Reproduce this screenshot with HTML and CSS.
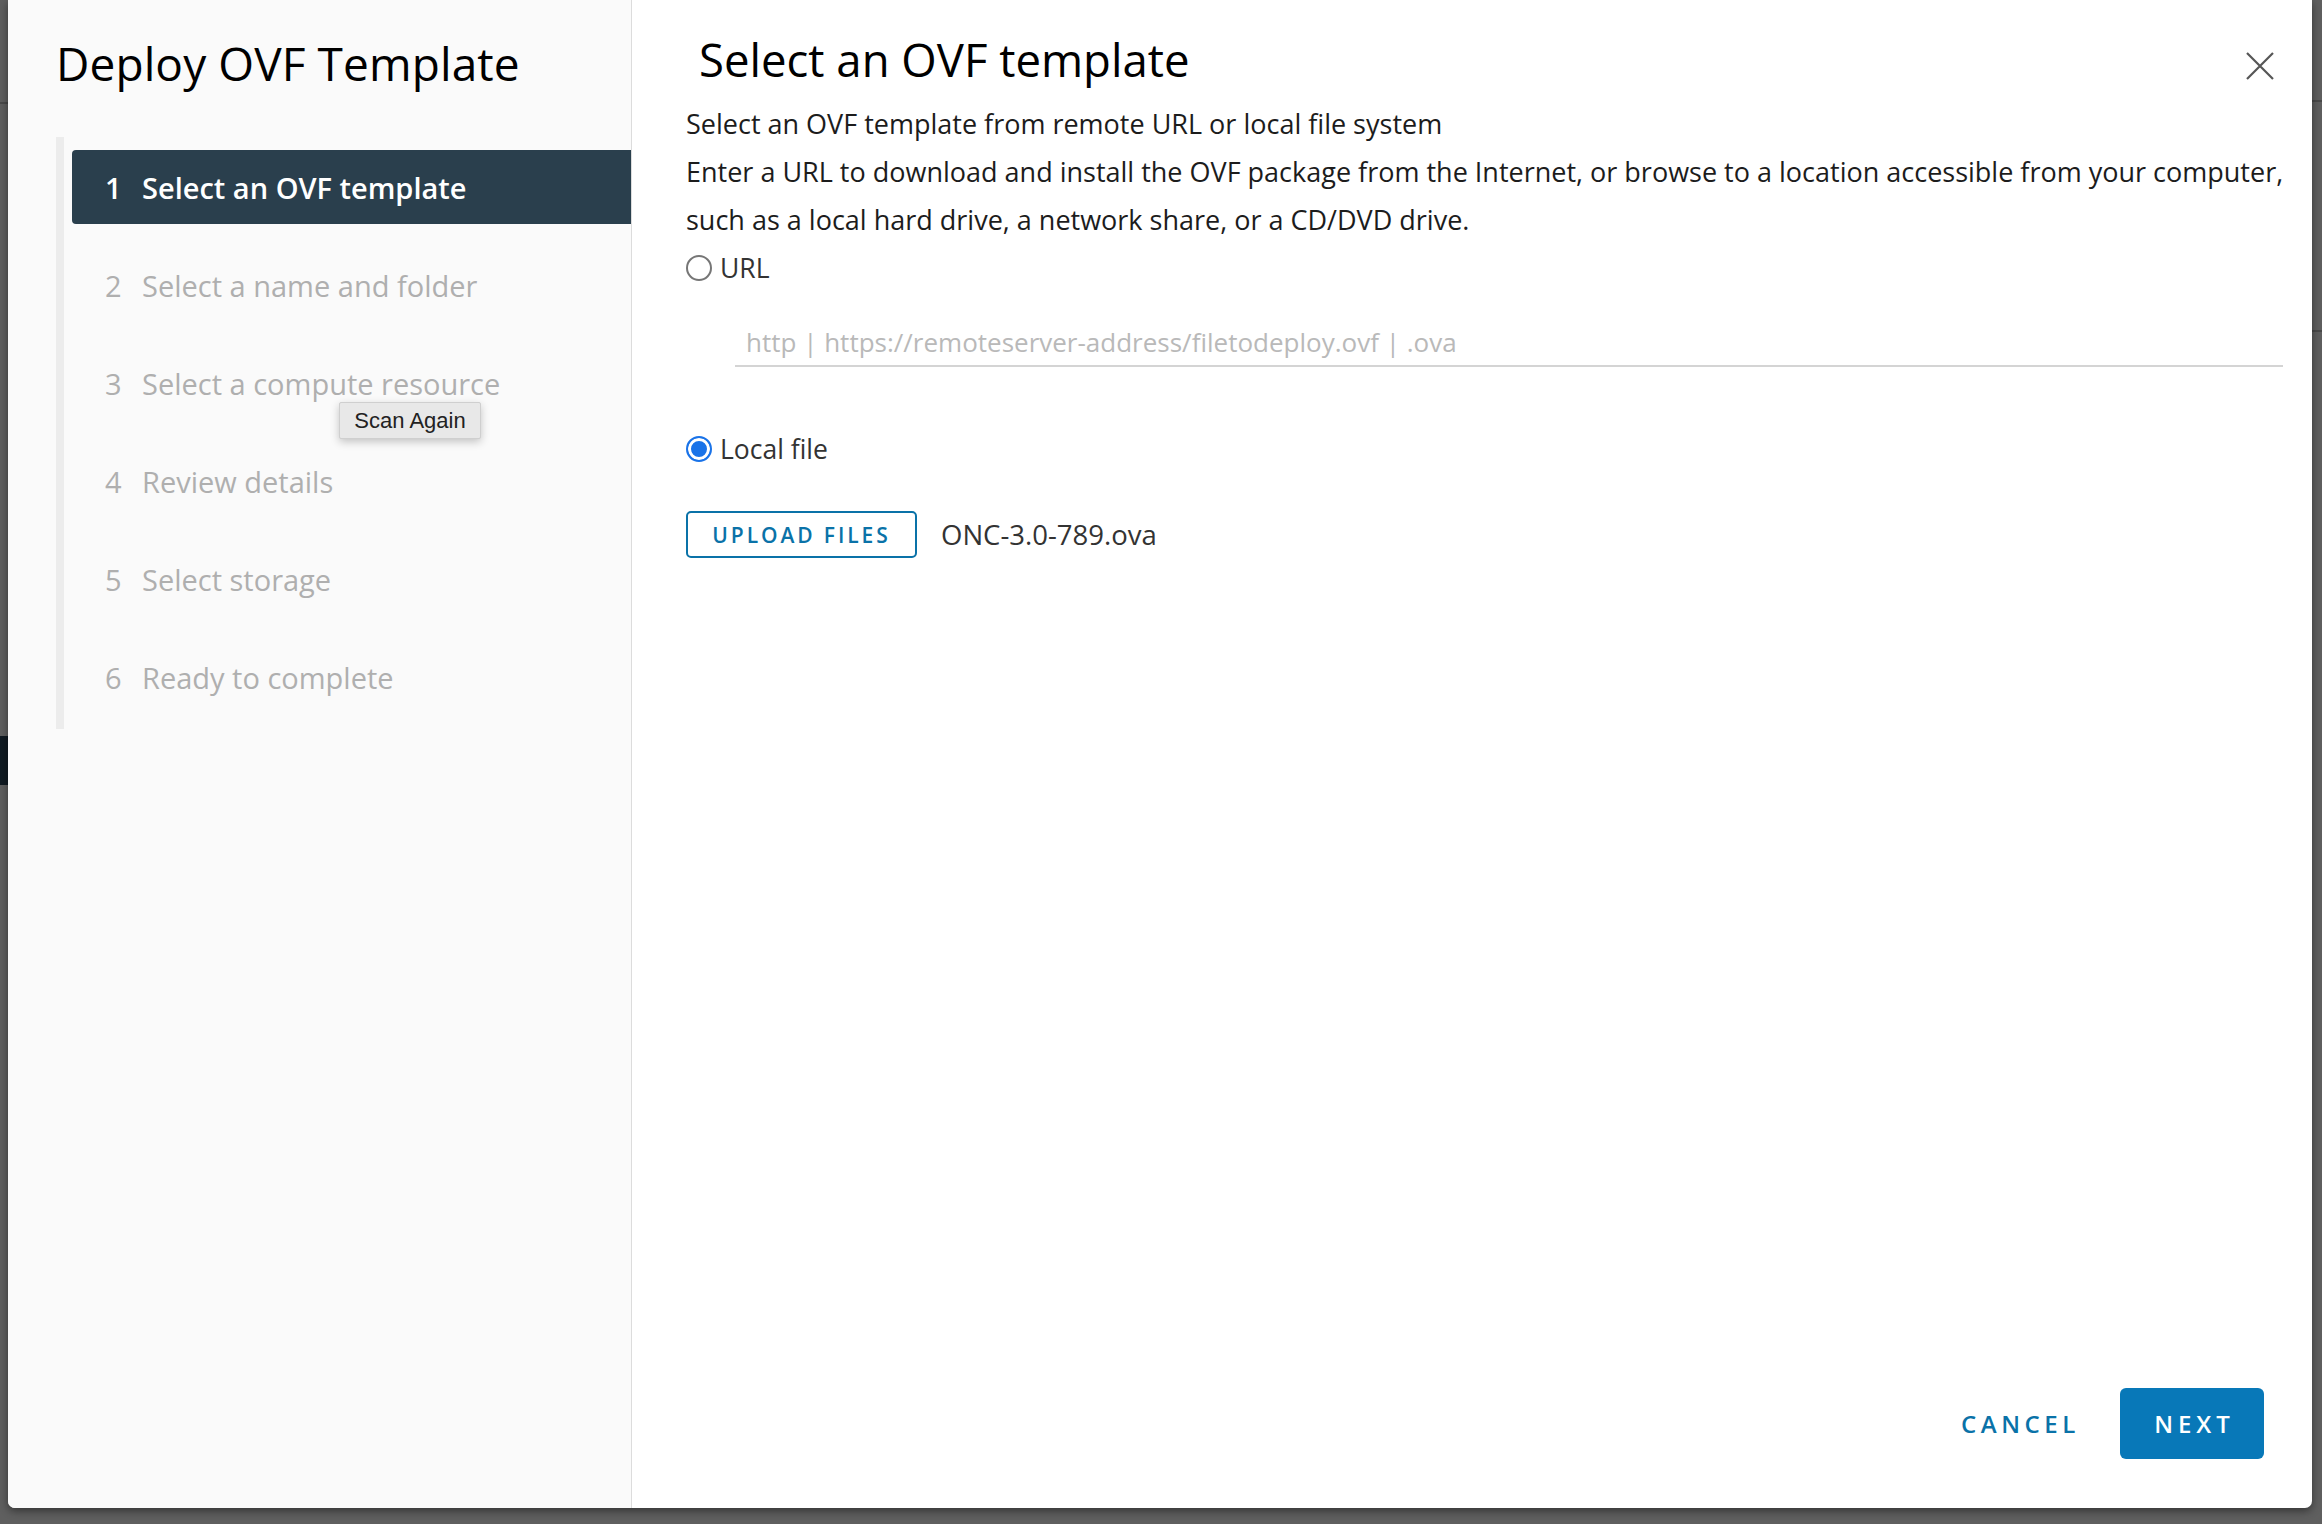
FILE: index.html
```html
<!DOCTYPE html>
<html lang="en">
<head>
<meta charset="utf-8">
<title>Deploy OVF Template</title>
<link rel="stylesheet" href="styles.css">
</head>
<body>
<div class="page">
  <div class="modal">
    <aside class="sidebar">
      <h1 class="wizard-title">Deploy OVF Template</h1>
      <ol class="steps">
        <li class="step active"><span class="num">1</span><span class="label">Select an OVF template</span></li>
        <li class="step"><span class="num">2</span><span class="label">Select a name and folder</span></li>
        <li class="step"><span class="num">3</span><span class="label">Select a compute resource</span></li>
        <li class="step"><span class="num">4</span><span class="label">Review details</span></li>
        <li class="step"><span class="num">5</span><span class="label">Select storage</span></li>
        <li class="step"><span class="num">6</span><span class="label">Ready to complete</span></li>
      </ol>
      <div class="tooltip">Scan Again</div>
    </aside>
    <main class="content">
      <header class="content-header">
        <h2 class="page-title">Select an OVF template</h2>
        <button class="close" aria-label="Close">
          <svg width="28" height="28" viewBox="0 0 28 28"><path d="M1 1 L27 27 M27 1 L1 27" stroke="#565656" stroke-width="2.2" fill="none"/></svg>
        </button>
      </header>
      <p class="desc">Select an OVF template from remote URL or local file system</p>
      <p class="desc">Enter a URL to download and install the OVF package from the Internet, or browse to a location accessible from your computer, such as a local hard drive, a network share, or a CD/DVD drive.</p>
      <label class="radio-row"><input type="radio" name="src" class="radio"><span>URL</span></label>
      <div class="url-field"><input type="text" class="url-input" placeholder="http | https://remoteserver-address/filetodeploy.ovf | .ova"></div>
      <label class="radio-row local"><input type="radio" name="src" class="radio" checked><span>Local file</span></label>
      <div class="upload-row">
        <button class="btn-outline">UPLOAD FILES</button>
        <span class="file-name">ONC-3.0-789.ova</span>
      </div>
      <footer class="footer">
        <button class="btn-link">CANCEL</button>
        <button class="btn-primary">NEXT</button>
      </footer>
    </main>
  </div>
</div>
</body>
</html>
```

FILE: styles.css
```css
* { box-sizing: border-box; }
html, body { margin: 0; padding: 0; }
body {
  width: 2322px;
  height: 1524px;
  overflow: hidden;
  background: #606060;
  font-family: "Open Sans", "Lato", sans-serif;
}
.page {
  width: 2322px;
  height: 1524px;
  padding: 0 10px 16px 8px;
  background:
    linear-gradient(#101a22, #101a22) 0 736px / 8px 49px no-repeat,
    linear-gradient(#4a4a4a, #4a4a4a) 0 102px / 8px 2px no-repeat,
    linear-gradient(#4a4a4a, #4a4a4a) 2312px 100px / 10px 2px no-repeat,
    linear-gradient(#4a4a4a, #4a4a4a) 2312px 330px / 10px 2px no-repeat,
    #5f5f5f;
}
.modal {
  display: flex;
  height: 1508px;
  background: #fff;
  border-radius: 0 0 7px 7px;
  box-shadow: 0 3px 8px rgba(0,0,0,0.45);
  overflow: hidden;
}
.sidebar {
  position: relative;
  width: 624px;
  flex: none;
  background: #fafafa;
  border-right: 1px solid #dcdcdc;
  padding: 36px 0 0 48px;
}
.wizard-title {
  margin: 0;
  font-weight: 400;
  font-size: 46px;
  line-height: 54px;
  color: #000;
  letter-spacing: 0.1px;
}
.steps {
  list-style: none;
  margin: 47px 0 0 0;
  padding: 13px 0 15px 8px;
  border-left: 8px solid #ececec;
  display: flex;
  flex-direction: column;
  gap: 24px;
}
.step {
  height: 74px;
  display: flex;
  align-items: center;
  padding-left: 33px;
  font-size: 29px;
  color: #afafaf;
  border-radius: 4px 0 0 4px;
}
.step .num { width: 37px; }
.step.active {
  background: #2a3f4d;
  color: #fff;
  font-weight: 600;
}
.tooltip {
  position: absolute;
  left: 331px;
  top: 402px;
  width: 142px;
  height: 37px;
  background: #e8e8e8;
  border: 1px solid #cfcfcf;
  border-radius: 2px;
  box-shadow: 0 3px 8px rgba(0,0,0,0.22);
  font-family: "Liberation Sans", "Roboto", sans-serif;
  font-size: 22px;
  color: #222;
  display: flex;
  align-items: center;
  justify-content: center;
}
.content {
  flex: 1;
  display: flex;
  flex-direction: column;
  padding: 36px 20px 49px 54px;
  color: #1c1c1c;
}
.content-header {
  display: flex;
  justify-content: space-between;
  align-items: flex-start;
}
.page-title {
  margin: 0 0 0 13px;
  font-weight: 400;
  font-size: 45.5px;
  line-height: 47px;
  color: #000;
}
.close {
  border: 0;
  background: none;
  padding: 0;
  margin: 16px 18px 0 0;
  width: 28px;
  height: 28px;
  cursor: pointer;
}
.close svg { display: block; }
.desc {
  margin: 0;
  font-size: 27px;
  line-height: 48px;
}
.desc:first-of-type { margin-top: 17px; }
.radio-row {
  display: flex;
  align-items: center;
  height: 48px;
  font-size: 26.5px;
  color: #333;
  gap: 8px;
}
.radio {
  appearance: none;
  -webkit-appearance: none;
  margin: 0;
  width: 26px;
  height: 26px;
  border-radius: 50%;
  border: 2px solid #767676;
  background: #fff;
}
.radio:checked {
  border: 2px solid #1a73e8;
  background: #1a73e8;
  box-shadow: inset 0 0 0 3px #fff;
}
.url-field {
  margin: 26px 9px 0 49px;
}
.url-input {
  display: block;
  width: 100%;
  height: 49px;
  border: 0;
  border-bottom: 2px solid #d4d4d4;
  background: transparent;
  padding: 0 0 0 11px;
  font-family: inherit;
  font-size: 26px;
  color: #333;
  outline: none;
}
.url-input::placeholder { color: #b9b9b9; }
.radio-row.local { margin-top: 58px; }
.upload-row {
  margin-top: 38px;
  display: flex;
  align-items: center;
  gap: 24px;
}
.btn-outline {
  width: 231px;
  height: 47px;
  border: 2px solid #0a72a8;
  border-radius: 5px;
  background: #fff;
  color: #0a72a8;
  font-family: inherit;
  font-weight: 600;
  font-size: 21px;
  letter-spacing: 2.9px;
  padding: 0;
}
.file-name {
  font-size: 27.5px;
  color: #333;
}
.footer {
  margin-top: auto;
  display: flex;
  justify-content: flex-end;
  align-items: center;
  padding-right: 28px;
}
.btn-link {
  border: 0;
  background: none;
  padding: 0;
  margin-right: 40px;
  color: #0a72a8;
  font-family: inherit;
  font-weight: 600;
  font-size: 24px;
  letter-spacing: 4.6px;
}
.btn-primary {
  width: 144px;
  height: 71px;
  border: 0;
  border-radius: 6px;
  background: #0878b8;
  color: #fff;
  font-family: inherit;
  font-weight: 600;
  font-size: 24px;
  letter-spacing: 5px;
  padding: 0 0 0 5px;
}
```
